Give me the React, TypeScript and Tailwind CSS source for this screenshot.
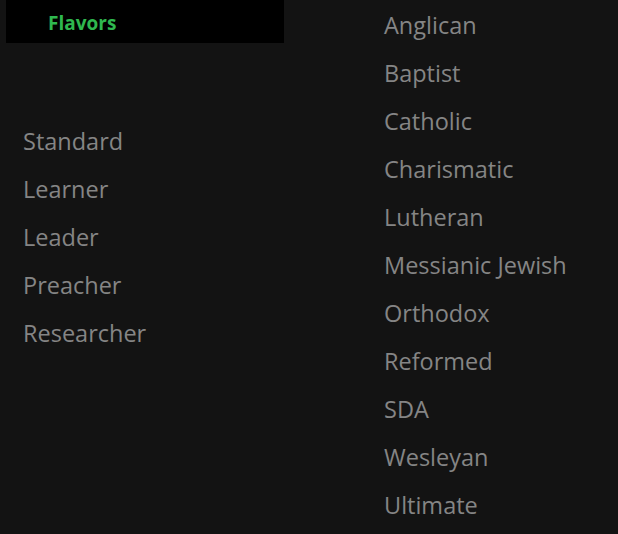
import React from "react";

const modes = ["Standard", "Learner", "Leader", "Preacher", "Researcher"];

const traditions = [
    "Anglican",
    "Baptist",
    "Catholic",
    "Charismatic",
    "Lutheran",
    "Messianic Jewish",
    "Orthodox",
    "Reformed",
    "SDA",
    "Wesleyan",
    "Ultimate",
];

const App: React.FC = () => {
    return (
        <div
            className="flex h-[534px] w-full overflow-hidden bg-[#131313]"
            style={{ fontFamily: "'Open Sans', sans-serif" }}
        >
            <div className="w-[384px] shrink-0 pl-[6px]">
                <div className="flex h-[43px] w-[278px] items-center bg-black pl-[42px] pt-[3px]">
                    <span className="text-[19px] font-bold text-[#2fb84f]">Flavors</span>
                </div>
                <ul className="mt-[74px] pl-[17px]">
                    {modes.map((m) => (
                        <li key={m} className="h-[48px] text-[23.5px] leading-[48px] text-[#858585]">
                            {m}
                        </li>
                    ))}
                </ul>
            </div>
            <ul className="pt-[1px]">
                {traditions.map((t) => (
                    <li key={t} className="h-[48px] text-[23.5px] leading-[48px] text-[#858585]">
                        {t}
                    </li>
                ))}
            </ul>
        </div>
    );
};

export default App;
